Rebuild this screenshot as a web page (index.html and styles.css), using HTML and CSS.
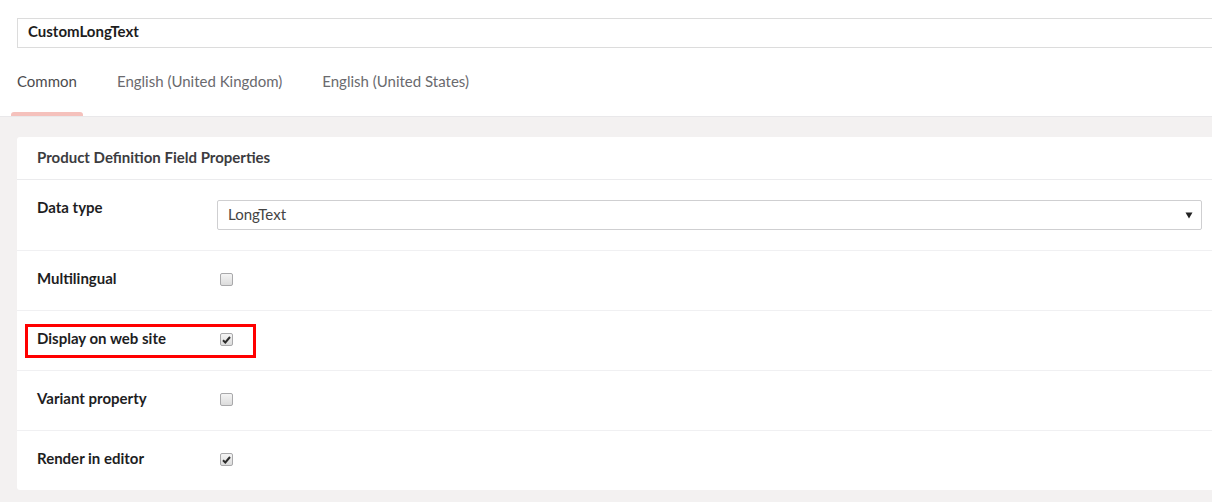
FILE: index.html
```html
<!DOCTYPE html>
<html>
<head>
<meta charset="utf-8">
<link rel="stylesheet" href="styles.css">
</head>
<body>
<div class="page">
  <div class="top">
    <div class="name-input">CustomLongText</div>
    <nav class="tabs">
      <div class="tab active"><span class="tab-label">Common</span><span class="tab-bar"></span></div>
      <div class="tab"><span class="tab-label">English (United Kingdom)</span><span class="tab-bar"></span></div>
      <div class="tab"><span class="tab-label">English (United States)</span><span class="tab-bar"></span></div>
    </nav>
  </div>
  <div class="content">
    <section class="panel">
      <header class="panel-head">Product Definition Field Properties</header>
      <div class="row">
        <label class="row-label">Data type</label>
        <div class="control">
          <div class="select">
            <span>LongText</span>
            <svg class="caret" width="8" height="7" viewBox="0 0 8 7"><path d="M0.5 0.5h7L4 6.5z" fill="#222"/></svg>
          </div>
        </div>
      </div>
      <div class="row">
        <label class="row-label">Multilingual</label>
        <div class="control"><span class="cb"></span></div>
      </div>
      <div class="row highlighted">
        <label class="row-label">Display on web site</label>
        <div class="control"><span class="cb checked"><svg width="9" height="8" viewBox="0 0 9 8"><path d="M1 4.3l2.3 2.2L8 1" fill="none" stroke="#2b2b2b" stroke-width="2"/></svg></span></div>
        <span class="annot"></span>
      </div>
      <div class="row">
        <label class="row-label">Variant property</label>
        <div class="control"><span class="cb"></span></div>
      </div>
      <div class="row last">
        <label class="row-label">Render in editor</label>
        <div class="control"><span class="cb checked"><svg width="9" height="8" viewBox="0 0 9 8"><path d="M1 4.3l2.3 2.2L8 1" fill="none" stroke="#2b2b2b" stroke-width="2"/></svg></span></div>
      </div>
    </section>
  </div>
</div>
</body>
</html>
```
FILE: styles.css
```css
html, body {
  margin: 0;
  padding: 0;
  background: #fff;
  overflow: hidden;
}
body {
  font-family: Lato, "Open Sans", sans-serif;
  font-size: 15px;
  line-height: 20px;
  color: #1b264f;
}
.page {
  width: 1212px;
  height: 502px;
  display: flex;
  flex-direction: column;
}
.top {
  padding: 18px 0 0 17px;
}
.name-input {
  box-sizing: border-box;
  width: 1215px;
  height: 30px;
  border: 1px solid #dcdcdc;
  border-right: none;
  padding: 2px 10px 6px;
  font-weight: 700;
  color: #1d1d1d;
  line-height: 20px;
}
.tabs {
  display: flex;
  height: 68px;
  margin-left: -6px;
  gap: 28px;
}
.tab {
  display: flex;
  flex-direction: column;
  padding: 0 6px;
  color: #6a6a6e;
}
.tab-label {
  padding-top: 23px;
  white-space: nowrap;
}
.tab.active .tab-label {
  color: #4b4b4e;
}
.tab-bar {
  margin-top: auto;
  margin-left: -6px;
  margin-right: -6px;
  height: 4px;
  border-radius: 3px 3px 0 0;
}
.tab.active .tab-bar {
  background: #f5c1bc;
}
.content {
  flex: 1;
  background: #f3f1f1;
  border-top: 1px solid #e9e8ea;
  padding: 20px 0 0 17px;
}
.panel {
  width: 1205px;
  background: #fff;
  border-radius: 3px;
}
.panel-head {
  padding: 10px 20px 12px;
  border-bottom: 1px solid #ebebed;
  color: #3c3c40;
  font-weight: 700;
}
.row {
  position: relative;
  display: flex;
  padding: 17px 20px 21px;
  border-bottom: 1px solid #f0f0f2;
}
.row.last {
  border-bottom: none;
}
.row-label {
  width: 180px;
  flex: none;
  font-weight: 700;
  color: #1e1e1f;
}
.control {
  flex: 1;
  min-height: 21px;
}
.select {
  box-sizing: border-box;
  margin: 3px 0 -1px;
  height: 30px;
  border: 1px solid #cfcfd1;
  border-radius: 2px;
  display: flex;
  align-items: center;
  justify-content: space-between;
  padding: 0 8px 3px 10px;
  color: #444;
}
.caret {
  display: block;
  margin-top: 3px;
}
.cb {
  box-sizing: border-box;
  display: flex;
  align-items: center;
  justify-content: center;
  margin: 5px 0 0 3px;
  width: 13px;
  height: 13px;
  border: 1px solid #a9a9ab;
  border-radius: 2px;
  background: linear-gradient(#f4f4f4, #dcdcdc);
}
.cb svg {
  display: block;
}
.annot {
  position: absolute;
  left: 8px;
  top: 13px;
  width: 231px;
  height: 34px;
  box-sizing: border-box;
  border: 3px solid #ff0000;
}
```
